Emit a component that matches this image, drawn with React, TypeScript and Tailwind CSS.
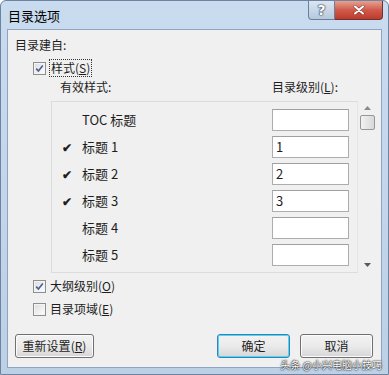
import { useState } from 'react'

const FONT = { fontFamily: '"Noto Sans CJK SC", "Noto Sans", sans-serif' }

const ROWS = [
  { name: 'TOC 标题', level: '', checked: false },
  { name: '标题 1', level: '1', checked: true },
  { name: '标题 2', level: '2', checked: true },
  { name: '标题 3', level: '3', checked: true },
  { name: '标题 4', level: '', checked: false },
  { name: '标题 5', level: '', checked: false },
]

function CheckBox({ checked }: { checked: boolean }) {
  return (
    <span className="w-[13px] h-[13px] shrink-0 border border-[#8e8f8f] bg-gradient-to-br from-[#dcdcdc] to-[#ffffff] flex items-center justify-center">
      <span className="w-[11px] h-[11px] border border-[#f4f4f4] flex items-center justify-center">
        {checked && (
          <svg width="9" height="9" viewBox="0 0 9 9">
            <path d="M1.2 4.6 L3.4 7 L7.8 1.4" fill="none" stroke="#4a5f97" strokeWidth="1.6" />
          </svg>
        )}
      </span>
    </span>
  )
}

function Button({ label, hotkey, primary }: { label: string; hotkey?: string; primary?: boolean }) {
  return (
    <div
      className={
        'h-[24px] rounded-[3px] border flex items-center justify-center text-[12px] text-[#1e1e1e] bg-gradient-to-b from-[#f2f2f2] via-[#ebebeb] to-[#d6d6d6] ' +
        (primary ? 'border-[#3c7fb1] shadow-[inset_0_0_0_1px_#48d8fb]' : 'border-[#707070] shadow-[inset_0_0_0_1px_#fbfbfb]')
      }
    >
      {label}
      {hotkey && (
        <>
          (<span className="underline">{hotkey}</span>)
        </>
      )}
    </div>
  )
}

export default function App() {
  const [rows] = useState(ROWS)

  return (
    <div
      className="relative w-[389px] h-[375px] bg-gradient-to-b from-[#c9dbef] via-[#c3d6eb] to-[#bcd0e6] rounded-t-[6px] border border-[#6d83a0] flex flex-col px-[6px] pb-[6px] overflow-hidden"
      style={FONT}
    >
      {/* Title bar */}
      <div className="h-[28px] shrink-0 flex items-start justify-between">
        <span className="mt-[5px] ml-[1px] text-[13px] text-[#000]">目录选项</span>
        <div className="flex -mr-[1px]">
          <div className="w-[27px] h-[19px] border border-[#6b7f99] border-t-0 rounded-bl-[4px] bg-gradient-to-b from-[#dbe6f3] to-[#b7c9de] flex items-center justify-center">
            <span
              className="text-[14px] leading-[14px] font-bold text-white"
              style={{ fontFamily: '"DejaVu Sans", sans-serif', textShadow: '0 0 1px #2f3b4c, 0 0 1px #2f3b4c, 0 0 2px #2f3b4c' }}
            >
              ?
            </span>
          </div>
          <div className="w-[48px] h-[19px] border border-[#6b3434] border-t-0 border-l-0 rounded-br-[4px] bg-gradient-to-b from-[#e6a192] via-[#cf5a4a] to-[#c0392b] flex items-center justify-center">
            <svg width="12" height="10" viewBox="0 0 12 10">
              <path d="M2 1.5 L10 8.5 M10 1.5 L2 8.5" stroke="#5a1f1a" strokeWidth="3.2" strokeLinecap="round" opacity="0.5" />
              <path d="M2 1.5 L10 8.5 M10 1.5 L2 8.5" stroke="#ffffff" strokeWidth="2" strokeLinecap="round" />
            </svg>
          </div>
        </div>
      </div>

      {/* Client area */}
      <div className="flex-1 bg-[#f0f0f0] border border-[#8ea4c1] flex flex-col text-[12px] text-[#1e1e1e]">
        <div className="mt-[7px] ml-[7px] leading-[16px]">目录建自:</div>

        <div className="mt-[6px] ml-[25px] flex items-center gap-[3px]">
          <CheckBox checked />
          <span className="border border-dotted border-[#333] px-[1px] leading-[16px]">
            样式(<span className="underline">S</span>)
          </span>
        </div>

        <div className="mt-[2px] flex items-end leading-[16px]">
          <span className="ml-[52px] w-[212px]">有效样式:</span>
          <span>
            目录级别(<span className="underline">L</span>):
          </span>
        </div>

        <div className="mt-[6px] flex">
          {/* List */}
          <div className="ml-[43px] w-[307px] h-[172px] border border-[#dcdcdc] border-r-[#e4e4e4] pt-[7px] flex flex-col gap-[5px] overflow-hidden">
            {rows.map(r => (
              <div key={r.name} className="flex items-center h-[22px] shrink-0">
                <span className="w-[30px] pl-[10px] text-[12px] font-bold">{r.checked ? '✔' : ''}</span>
                <span className="w-[190px] text-[13px]">{r.name}</span>
                <div className="w-[77px] h-[22px] bg-white border border-[#abadb3] border-t-[#a0a0a0] flex items-center pl-[3px] text-[13px]">
                  {r.level}
                </div>
              </div>
            ))}
          </div>

          {/* Scrollbar */}
          <div className="w-[17px] ml-[1px] h-[172px] flex flex-col items-center pt-[5px]">
            <svg width="7" height="4" viewBox="0 0 7 4">
              <path d="M0 4 L3.5 0 L7 4 Z" fill="#8a8a8a" />
            </svg>
            <div className="mt-[5px] w-[15px] h-[15px] border border-[#979797] rounded-[2px] bg-gradient-to-r from-[#f2f2f2] to-[#d8d8d8]" />
            <div className="flex-1" />
            <svg width="7" height="4" viewBox="0 0 7 4" className="mb-[6px]">
              <path d="M0 0 L7 0 L3.5 4 Z" fill="#5a5a5a" />
            </svg>
          </div>
        </div>

        <div className="mt-[5px] ml-[25px] flex items-center gap-[4px] leading-[16px]">
          <CheckBox checked />
          <span>
            大纲级别(<span className="underline">O</span>)
          </span>
        </div>
        <div className="mt-[7px] ml-[25px] flex items-center gap-[4px] leading-[16px]">
          <CheckBox checked={false} />
          <span>
            目录项域(<span className="underline">E</span>)
          </span>
        </div>

        <div className="mt-[17px] flex">
          <div className="ml-[7px] w-[79px]">
            <Button label="重新设置" hotkey="R" />
          </div>
          <div className="ml-[123px] w-[73px]">
            <Button label="确定" primary />
          </div>
          <div className="ml-[10px] w-[73px]">
            <Button label="取消" />
          </div>
        </div>
      </div>

      {/* Watermark */}
      <div className="absolute right-[6px] bottom-[3px] text-[10px] leading-[12px] text-white [text-shadow:0_0_2px_#000,0_0_1px_#000]">
        头条 @小兴电脑小技巧
      </div>
    </div>
  )
}
